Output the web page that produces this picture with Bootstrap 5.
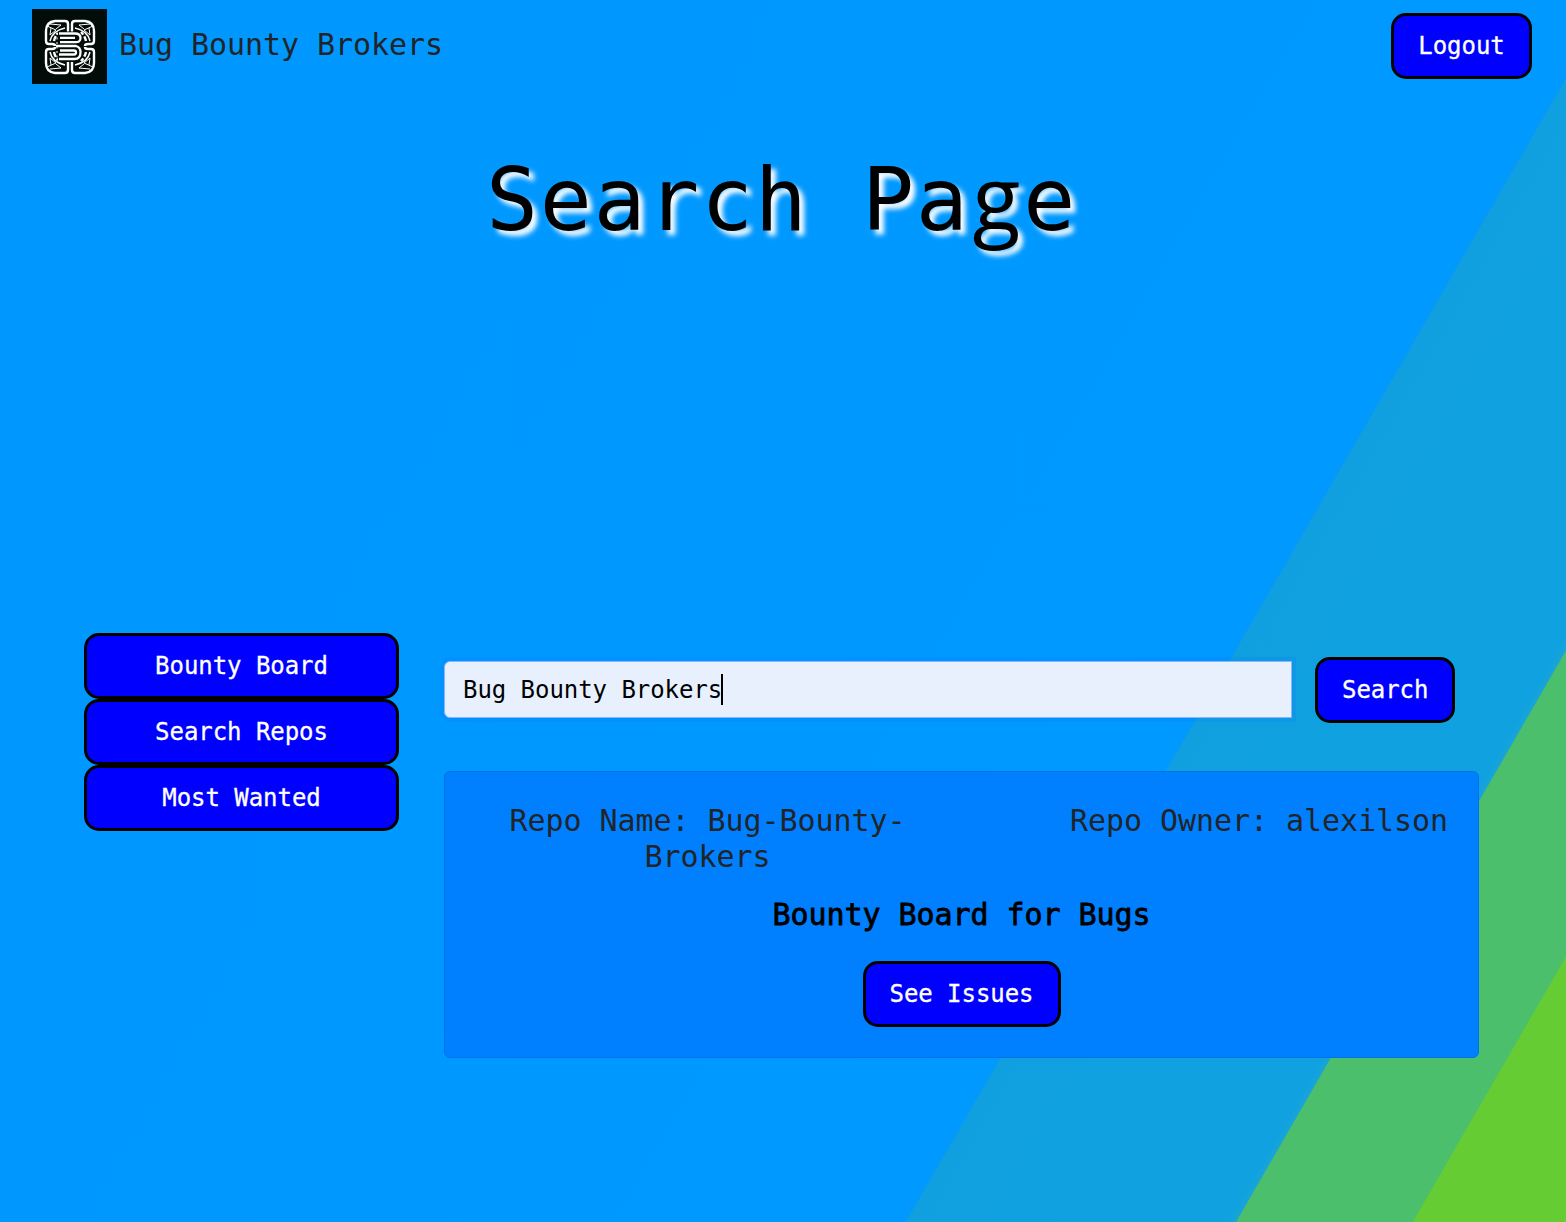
<!DOCTYPE html>
<html lang="en">
<head>
<meta charset="utf-8">
<meta name="viewport" content="width=device-width, initial-scale=1">
<title>Bug Bounty Brokers</title>
<link href="https://cdn.jsdelivr.net/npm/bootstrap@5.3.0/dist/css/bootstrap.min.css" rel="stylesheet">
<style>
body{min-height:1222px;font-family:"DejaVu Sans Mono",monospace;font-size:30px;line-height:36px;color:#212529;letter-spacing:-.06px;overflow-x:hidden;
background:linear-gradient(120deg,#0098ff 0,#09f 1388px,#0399fb 1395px,#10a0e0 1396px,#0fa1e0 1674px,#19a4d7 1681px,#4bbf6c 1682px,#4bbf6c 1834px,#6c3 1835px) 0 0/1566px 1222px no-repeat}
.topbar{height:92px;padding:0 34px 0 32px}
.logo{width:75px;height:75px;margin-right:12px}
.brand-name{padding-bottom:2px}
.btn-bug{--bs-btn-color:#fff;--bs-btn-bg:#00f;--bs-btn-border-color:#000;--bs-btn-hover-color:#fff;--bs-btn-hover-bg:#00c;--bs-btn-hover-border-color:#000;--bs-btn-padding-x:24px;--bs-btn-padding-y:12px;--bs-btn-font-size:24px;--bs-btn-line-height:36px;--bs-btn-border-width:3px;--bs-btn-border-radius:15px;letter-spacing:-.05px;-webkit-text-stroke:.3px #fff}
.topbar .btn{width:141px}
.page-title{font-size:86.5px;line-height:110px;height:541px;padding:53px 3px 0 0;letter-spacing:1.65px;color:#000;font-weight:400;text-shadow:5px 5px 5px #fff}
.two-story{display:inline-block;width:53.7px;font-family:"Open Sans",sans-serif;font-size:88px;line-height:1;text-align:center;letter-spacing:0}
.main-area{padding-left:84px}
.side{width:315px;margin-right:45px}
.results{width:1035px}
.search-row{padding-top:24px;gap:23px}
.search-box{width:848px;height:57px;margin-bottom:2px;padding:1px 18px 0;background:#e8f0fe;border:1px solid #86b7fe;border-radius:6px 0 0 6px;box-shadow:0 0 0 4px rgba(13,110,253,.15);color:#000;font-size:24px;letter-spacing:-.05px}
.caret{width:2px;height:31px;background:#000;margin:0 0 1px -1px}
.repo{margin-top:48px;height:287px;padding:31px 26px 0 58px;background:#0080ff;border:1px solid #0073e6;border-radius:6px}
.repo-name{width:409px}
.repo h5{font-size:30px;line-height:36px;font-weight:400;color:#000;margin:22px 32px 28px 0;-webkit-text-stroke:.8px #000}
.repo .btn{margin-right:32px}
</style>
</head>
<body>
<nav class="topbar d-flex align-items-center justify-content-between">
  <a class="d-flex align-items-center text-reset text-decoration-none" href="#">
    <svg class="logo" viewBox="0 0 75 75" fill="none" stroke="#fff">
      <rect width="75" height="75" fill="#020c08" stroke="none"/>
      <g stroke-width="2.4">
        <path d="M36 24V15q0-3-3-3H23q-9 1-9 10v10q0 3 3 3h3q3 0 3 2M40 24V15q0-3 3-3h10q9 1 9 10v10q0 3-3 3h-3q-3 0-3 2"/>
        <path d="M18 32q2-10 15-13M58 32q-2-10-15-13" stroke-width="1.5"/>
        <path d="M22 32q1-5 4-8M54 32q-1-5-5-9" stroke-dasharray="5 2"/>
        <path d="M15 17l9 4-6 5 1-7M18 15l11 1-5 4M61 17l-9 4 6 5-1-7M58 15l-11 1 5 4" stroke-width="1"/>
      </g>
      <g stroke-width="2.4" transform="matrix(1 0 0 -1 0 75)">
        <path d="M36 22V14q0-3-3-3H23q-9 1-9 10v11q0 3 3 3h3q3 0 3 2M40 22V14q0-3 3-3h10q9 1 9 10v11q0 3-3 3h-3q-3 0-3 2"/>
        <path d="M18 32q2-10 15-13M58 32q-2-10-15-13" stroke-width="1.5"/>
        <path d="M22 32q1-5 4-8M54 32q-1-5-5-9" stroke-dasharray="5 2"/>
        <path d="M15 17l9 4-6 5 1-7M18 15l11 1-5 4M61 17l-9 4 6 5-1-7M58 15l-11 1 5 4" stroke-width="1"/>
      </g>
      <path d="M25 22.5h19q6 1 6 7.500 0 5-4 7 5 2 5 7 0 7-7 7.500H26v-29z" fill="#020c08" stroke="none"/>
      <path d="M27 24.500h16q5.500 0 5.500 4.500t-5.500 4.200H28M28 28.800h15M24 37h20q4.500 1.200 4.500 6.200 0 6.800-6 6.800H27M28 41.500h14q2 0 2 2t-2 2H27" stroke-width="2.300"/>
      <path d="M25 24v28" stroke-dasharray="2 2.500"/>
    </svg>
    <span class="brand-name">Bug Bounty Brokers</span>
  </a>
  <button class="btn btn-bug" type="button">Logout</button>
</nav>
<h1 class="page-title text-center mb-0">Search Pa<span class="two-story">g</span>e</h1>
<main class="main-area d-flex align-items-start">
  <div class="side d-flex flex-column">
    <a class="btn btn-bug" href="#">Bounty Board</a>
    <a class="btn btn-bug" href="#">Search Repos</a>
    <a class="btn btn-bug" href="#">Most Wanted</a>
  </div>
  <section class="results">
    <form class="search-row d-flex align-items-center">
      <div class="search-box d-flex align-items-center" role="textbox" aria-label="Repository"><span>Bug Bounty Brokers</span><span class="caret"></span></div>
      <button class="btn btn-bug" type="button">Search</button>
    </form>
    <article class="repo text-center">
      <div class="d-flex justify-content-between align-items-start">
        <div class="repo-name">Repo Name: Bug-Bounty-Brokers</div>
        <div class="text-nowrap pe-1">Repo Owner: alexilson</div>
      </div>
      <h5>Bounty Board for Bugs</h5>
      <button class="btn btn-bug" type="button">See Issues</button>
    </article>
  </section>
</main>
<script src="https://cdn.jsdelivr.net/npm/bootstrap@5.3.0/dist/js/bootstrap.bundle.min.js"></script>
</body>
</html>
